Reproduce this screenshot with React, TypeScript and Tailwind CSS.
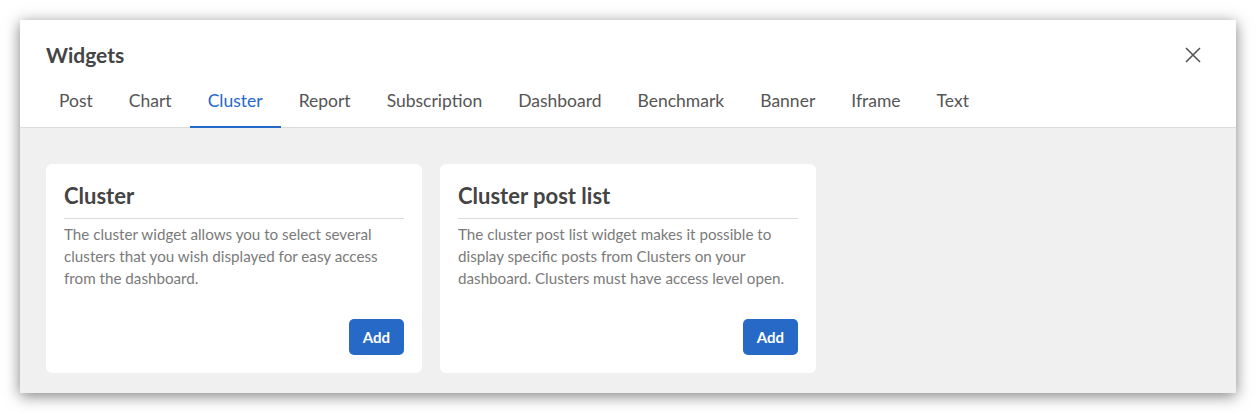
import { useState } from 'react';

const tabs = ['Post', 'Chart', 'Cluster', 'Report', 'Subscription', 'Dashboard', 'Benchmark', 'Banner', 'Iframe', 'Text'];

const widgets = [
  {
    title: 'Cluster',
    text: 'The cluster widget allows you to select several clusters that you wish displayed for easy access from the dashboard.',
  },
  {
    title: 'Cluster post list',
    text: 'The cluster post list widget makes it possible to display specific posts from Clusters on your dashboard. Clusters must have access level open.',
  },
];

function WidgetCard({ title, text }: { title: string; text: string }) {
  return (
    <div className="w-[376px] h-[209px] bg-white rounded-[6px] px-[18px] pt-[18px] pb-[18px] flex flex-col">
      <h3 className="text-[22px] leading-[28px] font-bold text-[#444444] pb-[8px] border-b border-[#dadada]">{title}</h3>
      <p className="mt-[4px] text-[15.2px] leading-[22px] text-[#7a7a7a]">{text}</p>
      <div className="mt-auto flex justify-end">
        <button
          type="button"
          className="w-[55px] h-[36px] rounded-[5px] bg-[#2669c6] text-white text-[15px] font-bold"
        >
          Add
        </button>
      </div>
    </div>
  );
}

export default function App() {
  const [active, setActive] = useState('Cluster');

  return (
    <div className="w-full h-[414px] bg-white pt-5 pb-[21px] px-5 font-['Lato',sans-serif]">
      <div className="h-full flex flex-col bg-white shadow-[0_3px_14px_rgba(0,0,0,0.5)]">
        <div className="border-b border-[#dcdcdc]">
          <div className="flex items-center justify-between pl-[26px] pr-[35px] pt-[21px] h-[49px]">
            <h2 className="text-[21px] leading-[28px] font-bold text-[#444444]">Widgets</h2>
            <button type="button" className="text-[#555555]">
              <svg width="16" height="16" viewBox="0 0 16 16" fill="none" stroke="currentColor" strokeWidth="1.6">
                <path d="M1 1L15 15M15 1L1 15" />
              </svg>
            </button>
          </div>
          <nav className="flex pl-[21px] mt-[7px] -mb-px">
            {tabs.map((t) => (
              <button
                key={t}
                type="button"
                onClick={() => setActive(t)}
                className={
                  t === active
                    ? 'h-[52px] px-[18px] text-[17.5px] text-[#2669c6] border-b-2 border-[#2669c6]'
                    : 'h-[52px] px-[18px] text-[17.5px] text-[#555555] border-b-2 border-transparent'
                }
              >
                {t}
              </button>
            ))}
          </nav>
        </div>
        <main className="flex-1 bg-[#f0f0f0] pl-[26px] pt-[36px] flex gap-[18px]">
          {widgets.map((w) => (
            <WidgetCard key={w.title} title={w.title} text={w.text} />
          ))}
        </main>
      </div>
    </div>
  );
}
